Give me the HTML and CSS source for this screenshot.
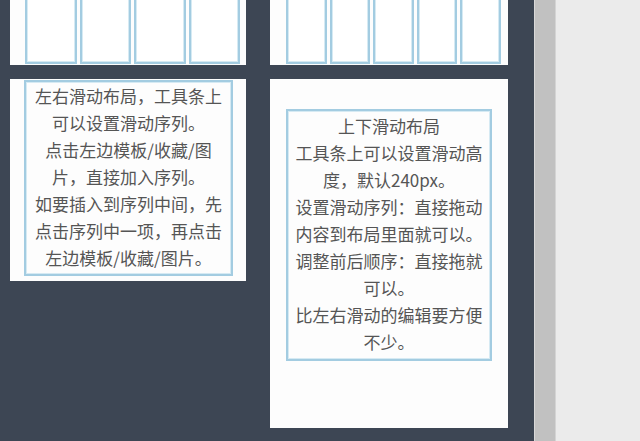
FILE: index.html
```html
<!DOCTYPE html>
<html lang="zh-CN">
<head>
<meta charset="utf-8">
<title>滑动布局</title>
<link rel="stylesheet" href="styles.css">
</head>
<body>
<div class="app">
  <div class="canvas">
    <div class="col col-left">
      <div class="card strip strip-4">
        <div class="slot"></div>
        <div class="slot"></div>
        <div class="slot"></div>
        <div class="slot"></div>
      </div>
      <div class="card note-card note-card-left">
        <div class="note">
          <p>左右滑动布局，工具条上可以设置滑动序列。</p>
          <p>点击左边模板/收藏/图片，直接加入序列。</p>
          <p>如要插入到序列中间，先点击序列中一项，再点击左边模板/收藏/图片。</p>
        </div>
      </div>
    </div>
    <div class="col col-right">
      <div class="card strip strip-5">
        <div class="slot"></div>
        <div class="slot"></div>
        <div class="slot"></div>
        <div class="slot"></div>
        <div class="slot"></div>
      </div>
      <div class="card note-card note-card-right">
        <div class="note">
          <p>上下滑动布局</p>
          <p>工具条上可以设置滑动高度，默认240px。</p>
          <p>设置滑动序列：直接拖动内容到布局里面就可以。</p>
          <p>调整前后顺序：直接拖就可以。</p>
          <p>比左右滑动的编辑要方便不少。</p>
        </div>
      </div>
    </div>
  </div>
  <div class="scrollbar"></div>
  <div class="side"></div>
</div>
</body>
</html>
```

FILE: styles.css
```css
html, body {
  margin: 0;
  padding: 0;
  height: 100%;
  overflow: hidden;
}

.app {
  display: flex;
  height: 441px;
  width: 640px;
}

.canvas {
  width: 534px;
  flex: 0 0 534px;
  box-sizing: border-box;
  background: #3d4654;
  display: flex;
  align-items: flex-start;
  gap: 24px;
  padding-left: 10px;
  overflow: hidden;
}

.col {
  display: flex;
  flex-direction: column;
  gap: 14px;
  margin-top: -40px;
}

.col-left { width: 236px; }
.col-right { width: 238px; }

.card {
  background: #fdfdfd;
}

.strip {
  display: grid;
  height: 105px;
  box-sizing: border-box;
  gap: 3px;
}

.strip-4 {
  grid-template-columns: repeat(4, 1fr);
  padding: 0 6px 1px 15px;
}

.strip-5 {
  grid-template-columns: repeat(5, 1fr);
  padding: 0 7px 1px 16px;
}

.slot {
  border: 2px solid #a3cce1;
  box-shadow: inset 0 0 0 1px #d6eaf3;
  background: #ffffff;
}

.note-card {
  box-sizing: border-box;
}

.note-card-left {
  padding: 1px 13px 5px 14px;
}

.note-card-right {
  height: 349px;
  padding: 30px 16px 0 16px;
}

.note {
  border: 2px solid #a3cce1;
  box-shadow: inset 0 0 0 1px #d6eaf3;
  font-family: "Noto Sans CJK SC", "Noto Sans", sans-serif;
  font-size: 17px;
  line-height: 27px;
  color: #555555;
  text-align: center;
}

.note-card-left .note {
  padding: 0 5px 3px;
}

.note-card-right .note {
  padding: 1px 5px 4px;
}

.note p {
  margin: 0;
}

.scrollbar {
  width: 22px;
  flex: 0 0 22px;
  box-sizing: border-box;
  background: #c1c1c1;
  border-left: 1px solid #d9d9d9;
  border-right: 1px solid #d4d4d4;
}

.side {
  flex: 1;
  background: #ebebeb;
}
```
